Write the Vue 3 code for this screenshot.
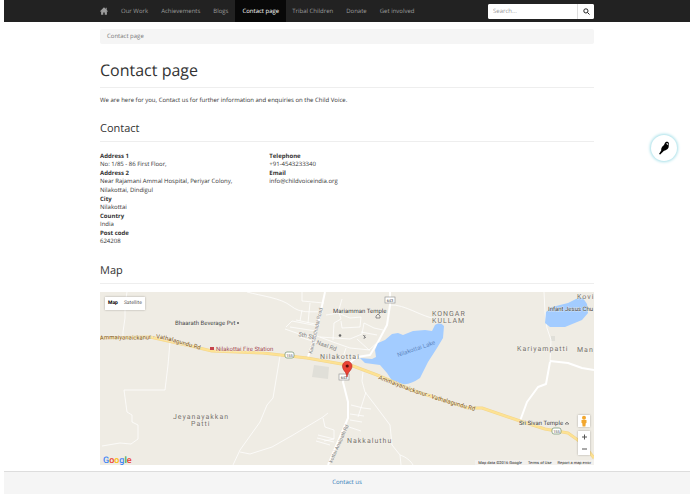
<script setup>
import { ref } from 'vue'

const links = [
  { label: 'Our Work' },
  { label: 'Achievements' },
  { label: 'Blogs' },
  { label: 'Contact page', active: true },
  { label: 'Tribal Children' },
  { label: 'Donate' },
  { label: 'Get involved' }
]

const address = [
  ['Address 1', ['No: 1/85 - 86 First Floor,']],
  ['Address 2', ['Near Rajamani Ammal Hospital, Periyar Colony,', 'Nilakottai, Dindigul']],
  ['City', ['Nilakottai']],
  ['Country', ['India']],
  ['Post code', ['624208']]
]

const direct = [
  ['Telephone', ['+91-4543233340']],
  ['Email', ['info@childvoiceindia.org']]
]

const query = ref('')
</script>

<template>
  <div class="page">
    <header class="navbar">
      <nav class="menu">
        <a class="home" href="#" aria-label="Home">
          <svg viewBox="0 0 16 16"><path d="M8 .5 0 8.300l1 1.200 1.200-1.100V15.500h4.300v-4.600h3v4.600h4.300V8.400l1.200 1.100 1-1.200-2.600-2.500V1.700h-2v2.200z" /></svg>
        </a>
        <a v-for="l in links" :key="l.label" href="#" :class="{ active: l.active }">{{ l.label }}</a>
      </nav>
      <form class="search" @submit.prevent>
        <input v-model="query" type="text" placeholder="Search..." aria-label="Search" />
        <button type="submit" aria-label="Submit search">
          <svg viewBox="0 0 14 14"><circle cx="5.800" cy="5.800" r="4.200" /><path d="m9 9 4 4" /></svg>
        </button>
      </form>
    </header>

    <main class="content">
      <div class="breadcrumb">Contact page</div>
      <h1>Contact page</h1>
      <p class="intro">We are here for you, Contact us for further information and enquiries on the Child Voice.</p>

      <h2>Contact</h2>
      <div class="details">
        <dl v-for="(group, i) in [address, direct]" :key="i">
          <template v-for="[term, lines] in group" :key="term">
            <dt>{{ term }}</dt>
            <dd v-for="line in lines" :key="line">{{ line }}</dd>
          </template>
        </dl>
      </div>

      <h2>Map</h2>
      <section class="map">
        <svg class="canvas" viewBox="100 292 494 173">
          <defs>
            <path id="road-west" d="M100 340C118 338 135 341 150 339S176 344 202 350" />
            <path id="road-east" d="M378 379 412 392 440 401 478 412" />
          </defs>
          <rect class="land" x="100" y="292" width="494" height="173" />
          <path class="block" d="m314 365 15 2-1 12-16-2zM551 336h4v5h-4z" />

          <g class="thin">
            <path d="M127 292 125 305 125 318 123 332 123 337" />
            <path d="M170 342 168 365 165 390 124 390 127 412 132 415 132 422 138 425 138 439 131 444 120 443 102 446" />
            <path d="M247 292C262 296 281 298 291 306S310 311 323 312" />
            <path d="M280 356 273 398 267 405 260 422 240 450 233 465M240 452 250 454 272 447 293 435 323 417 328 413M323 418 325 427 334 430 334 439 324 441M318 435 334 439M317 438 334 442M316 441 330 445" />
            <path d="M286 327 292 321 318 326M290 327 316 331M285 329 305 336 316 337M296 320 320 325M300 337 318 343M317 336 333 342 350 348 370 350M302 292 302 301 324 303M310 303 308 323M302 310 300 321M326 315 339 313 341 319 334 323 333 340M342 299 338 313 350 318 361 317 360 327 342 328 341 321M320 337 350 339 362 334 364 323 374 328 383 330M361 332 377 335M357 339 369 350 378 342M346 348 342 360" />
            <path d="M390 305C405 304 421 317 437 319" />
            <path d="M363 372 362 381 365 392 375 405 390 425 392 445 400 455 401 465M400 455C406 457 411 461 413 465M351 405 363 408 371 409M350 414 364 416M350 420 362 422M349 427 361 431M366 392 358 417" />
            <path d="M544 292 545 312 547 328 551 340 550 362" />
          </g>
          <g class="street">
            <path d="M325 292 320 315 315 335 308 357" />
            <path d="M390 292 390 305 387 325 378 342 370 355 357 357 347 365 343 382 348 402 348 418 342 432 328 465" />
            <path d="M550 362 546 384 538 387 527 402 520 421M550 361 568 363 582 368 594 370" />
          </g>

          <path class="water" d="M360 358 372 359 376 357 375 350 378 343 385 340 392 334 398 333 403 335 413 331 425 330 432 331 435 325 Q440 321 444 326 L443 338 437 348 428 362 420 378 Q410 385 403 384 L393 382 387 373 380 365 365 363Z" />
          <path class="water" d="M546 312 552 307 568 303 578 298 583 298 587 304 588 313 582 320 565 327 550 327 545 323Z" />

          <g class="highway">
            <path class="casing" d="M100 338 150 337 195 347 212 351 263 353 307 358 353 366 377 375 412 390 440 399 468 408 482 408 520 421 545 429 568 433 582 443 594 458" />
            <path d="M100 338 150 337 195 347 212 351 263 353 307 358 353 366 377 375 412 390 440 399 468 408 482 408 520 421 545 429 568 433 582 443 594 458" />
          </g>

          <g class="shield">
            <rect class="oval" x="285" y="352" width="9" height="6" rx="2" /><text x="289.500" y="357">155</text>
            <rect class="oval" x="552" y="428" width="9" height="6" rx="2" /><text x="556.500" y="433">155</text>
            <rect x="385" y="297" width="10" height="6" /><text x="390" y="302">643</text>
            <rect x="339" y="374" width="10" height="6" /><text x="344" y="379">643</text>
          </g>

          <g class="road-name">
            <text><textPath href="#road-west">Ammaiyanaickanur - Vathalagundu Rd</textPath></text>
            <text><textPath href="#road-east">Ammaiyanaickanur - Vathalagundu Rd</textPath></text>
          </g>
          <g class="street-name">
            <text class="long" transform="translate(312 354) rotate(-77)">Karumbuthadai Road</text>
            <text transform="translate(298 336) rotate(12)">5th St</text>
            <text transform="translate(316 344) rotate(20)">Naal Rd</text>
            <text class="long" transform="translate(332 463) rotate(-66)">kottai-Anaipath Rd</text>
          </g>
          <text class="lake" transform="translate(398 357) rotate(-19)">Nilakottai Lake</text>

          <g class="place">
            <text x="175" y="325">Bhaarath Beverage Pvt</text>
            <text x="333" y="313">Mariamman Temple</text>
            <text x="548" y="311">Infant Jesus Chu</text>
            <text x="519" y="425">Sri Sivan Temple</text>
            <text class="station" x="216" y="351">Nilakottai Fire Station</text>
          </g>
          <g class="area">
            <text x="320" y="359">Nilakottai</text>
            <text x="432" y="316">KONGAR</text>
            <text x="432" y="323">KULLAM</text>
            <text x="173" y="419">Jeyanayakkan</text>
            <text x="191" y="426">Patti</text>
            <text x="347" y="443">Nakkaluthu</text>
            <text x="517" y="351">Kariyampatti</text>
            <text x="577" y="352">Man</text>
            <text x="577" y="299">Kovi</text>
          </g>
          <g class="poi">
            <circle cx="238" cy="323" r="1.100" />
            <circle cx="340" cy="335.500" r="1.300" />
            <path d="M376 318v-2l2-2 2 2v2zM363 335l3 3M365 335l-1 4M565 424l2-2 2 2z" />
            <path class="fire" d="M210 347h4v3h-4z" />
          </g>

          <path class="pin" d="M347 377C346 371 342.500 370.500 342.500 366A4.700 4.700 0 0 1 352 366C352 370.500 348 371 347 377Z" />
          <circle class="pin-dot" cx="347.200" cy="366" r="1.600" />

          <text class="google" x="103" y="463"><tspan class="b">G</tspan><tspan class="r">o</tspan><tspan class="y">o</tspan><tspan class="b">g</tspan><tspan class="g">l</tspan><tspan class="r">e</tspan></text>
        </svg>

        <div class="types">
          <button type="button" class="on">Map</button>
          <button type="button">Satellite</button>
        </div>
        <div class="controls">
          <button type="button" class="pegman" aria-label="Street View">
            <svg viewBox="0 0 12 12"><circle cx="6" cy="2.800" r="2" /><path d="M3.500 5h5v3H7.800l-.4 3.500H4.600L4.200 8h-.7z" /></svg>
          </button>
          <div class="zoom">
            <button type="button" aria-label="Zoom in"><svg viewBox="0 0 12 12"><path d="M4 6h5M6.500 3.500v5" /></svg></button>
            <button type="button" aria-label="Zoom out"><svg viewBox="0 0 12 12"><path d="M4 6h5" /></svg></button>
          </div>
        </div>
        <div class="credits">
          <span>Map data ©2016 Google</span>
          <a href="#">Terms of Use</a>
          <a href="#">Report a map error</a>
        </div>
      </section>
    </main>

    <footer class="footer"><a href="#">Contact us</a></footer>

    <button class="bird" type="button" aria-label="Wagtail user bar">
      <svg viewBox="0 0 14 14"><path d="M8.500 1.200C10 .4 11.800 1 12 2.500c0 .7-.3 1.200-.3 2C12 7.500 10 9 7 9.800L3.200 13.600 2 13l2.200-3.600C4 7 5 5.500 6.800 4.200 7.600 3.500 7.500 2 8.500 1.200z" /><path class="cheek" d="M9.200 2.700c.8-.8 1.900-.5 2.300.2l-.7 1.200z" /></svg>
    </button>
  </div>
</template>

<style>
body {
  margin: 0;
  background: #fff;
}
</style>

<style scoped>
.page {
  margin: 0 5px 0 4px;
  font: 6px/9px "Open Sans", sans-serif;
  text-rendering: geometricPrecision;
  color: #333;
}
a {
  color: inherit;
  text-decoration: none;
}
button,
input {
  margin: 0;
  padding: 0;
  border: 0;
  font: inherit;
  text-rendering: inherit;
  color: inherit;
  background: #fff;
}
.navbar {
  display: flex;
  align-items: center;
  justify-content: space-between;
  height: 22px;
  padding: 0 96px;
  background: #222;
}
.menu {
  display: flex;
  align-self: stretch;
  color: #9d9d9d;
}
.menu a {
  padding: 0 7px 0 6px;
  line-height: 22px;
  white-space: nowrap;
}
.menu .home {
  display: flex;
  align-items: center;
  padding-left: 0;
}
.home svg {
  width: 8px;
  height: 8px;
  fill: #9d9d9d;
}
.menu .active {
  padding: 0 7px;
  color: #fff;
  background: #080808;
}
.search {
  display: flex;
  height: 15px;
  width: 106px;
  border-radius: 2px;
  overflow: hidden;
  background: #fff;
}
.search input {
  flex: 1;
  min-width: 0;
  padding: 0 5px;
  outline: 0;
}
.search input::placeholder {
  color: #999;
}
.search button {
  display: flex;
  align-items: center;
  justify-content: center;
  width: 17px;
  border-left: 1px solid #ddd;
}
.search svg {
  width: 7px;
  height: 7px;
  fill: none;
  stroke: #222;
  stroke-width: 2;
}
.content {
  padding: 7px 96px 6px;
}
.breadcrumb {
  padding: 3px 7px;
  border-radius: 2px;
  background: #f5f5f5;
  color: #777;
}
h1,
h2 {
  margin: 0;
  font-weight: 400;
  border-bottom: 1px solid #eee;
}
h1 {
  margin-top: 17px;
  padding-bottom: 8px;
  font-size: 16px;
  line-height: 18px;
}
.intro {
  margin: 8px 0 0;
}
h2 {
  margin-top: 18px;
  padding-bottom: 6px;
  font-size: 11px;
  line-height: 12px;
}
.details {
  display: grid;
  grid-template-columns: 1fr 2fr;
  column-gap: 7px;
  margin-top: 10px;
  padding-bottom: 1px;
}
dl {
  margin: 0;
}
dt {
  font-weight: 700;
  line-height: 8px;
}
dd {
  margin: 0;
}
.map {
  position: relative;
  margin-top: 8px;
  font-family: Roboto, sans-serif;
}
.canvas {
  display: block;
  width: 100%;
}
.land { fill: #efece4; }
.block { fill: #e0dfd8; }
.water { fill: #a3ccff; }
.thin,
.street,
.highway {
  fill: none;
  stroke: #fff;
  stroke-linejoin: round;
}
.thin { stroke-width: 1; stroke-opacity: .75; }
.street { stroke-width: 2; }
.highway { stroke: #fde293; stroke-width: 2; }
.highway .casing { stroke: #f3d58c; stroke-width: 3; }
.shield rect { fill: #fff; stroke: #999; stroke-width: .7; }
.shield .oval { stroke: #6f8f6f; }
.shield text { font-size: 4px; text-anchor: middle; fill: #444; }
.road-name { font-size: 6px; fill: #7d5620; }
.street-name { font-size: 6px; fill: #848484; }
.street-name .long { font-size: 5px; }
.lake { font-size: 6px; fill: #5f87c1; }
.place { font-size: 6px; fill: #444; }
.place .station { fill: #a04a50; }
.area { font-size: 7px; letter-spacing: 1px; fill: #76706a; }
.road-name text,
.place text,
.area text {
  paint-order: stroke;
  stroke: #f7f5ef;
  stroke-width: 1px;
  stroke-opacity: .6;
}
.poi { fill: #666; }
.poi path { stroke: #777; stroke-width: .8; fill: none; }
.poi .fire { fill: #c6444c; stroke: none; }
.pin { fill: #ea4335; stroke: #b3261e; stroke-width: .6; }
.pin-dot { fill: #5b0d0a; }
.google { font: 500 9px Roboto, sans-serif; }
.b { fill: #4285f4; }
.r { fill: #ea4335; }
.y { fill: #fbbc05; }
.g { fill: #34a853; }
.types {
  position: absolute;
  top: 5px;
  left: 5px;
  display: flex;
  height: 13px;
  box-shadow: 0 0 2px rgba(0, 0, 0, .3);
  font-size: 5px;
  color: #565656;
}
.types button {
  padding: 0 3px;
}
.types .on {
  font-weight: 700;
  color: #000;
}
.controls {
  position: absolute;
  right: 4px;
  bottom: 10px;
  display: flex;
  flex-direction: column;
  gap: 4px;
}
.controls button {
  display: flex;
  width: 12px;
  height: 12px;
}
.controls svg {
  width: 12px;
  height: 12px;
  fill: none;
  stroke: #555;
  stroke-width: 1;
}
.pegman,
.zoom {
  box-shadow: 0 0 2px rgba(0, 0, 0, .3);
}
.controls .pegman svg {
  fill: #f2a72e;
  stroke: none;
}
.credits {
  position: absolute;
  right: 0;
  bottom: 0;
  display: flex;
  gap: 6px;
  padding: 0 3px;
  font-size: 4px;
  line-height: 5px;
  color: #222;
  background: rgba(245, 245, 245, .6);
}
.footer {
  padding: 6px 0 7px;
  border-top: 1px solid #ddd;
  background: #f5f5f5;
  text-align: center;
  color: #337ab7;
}
.bird {
  position: fixed;
  top: 135px;
  right: 18px;
  display: flex;
  align-items: center;
  justify-content: center;
  width: 26px;
  height: 26px;
  border-radius: 50%;
  box-shadow: 0 0 3px 1px #a5dfe8;
}
.bird svg {
  width: 14px;
  height: 14px;
}
.cheek { fill: #fff; }
</style>
